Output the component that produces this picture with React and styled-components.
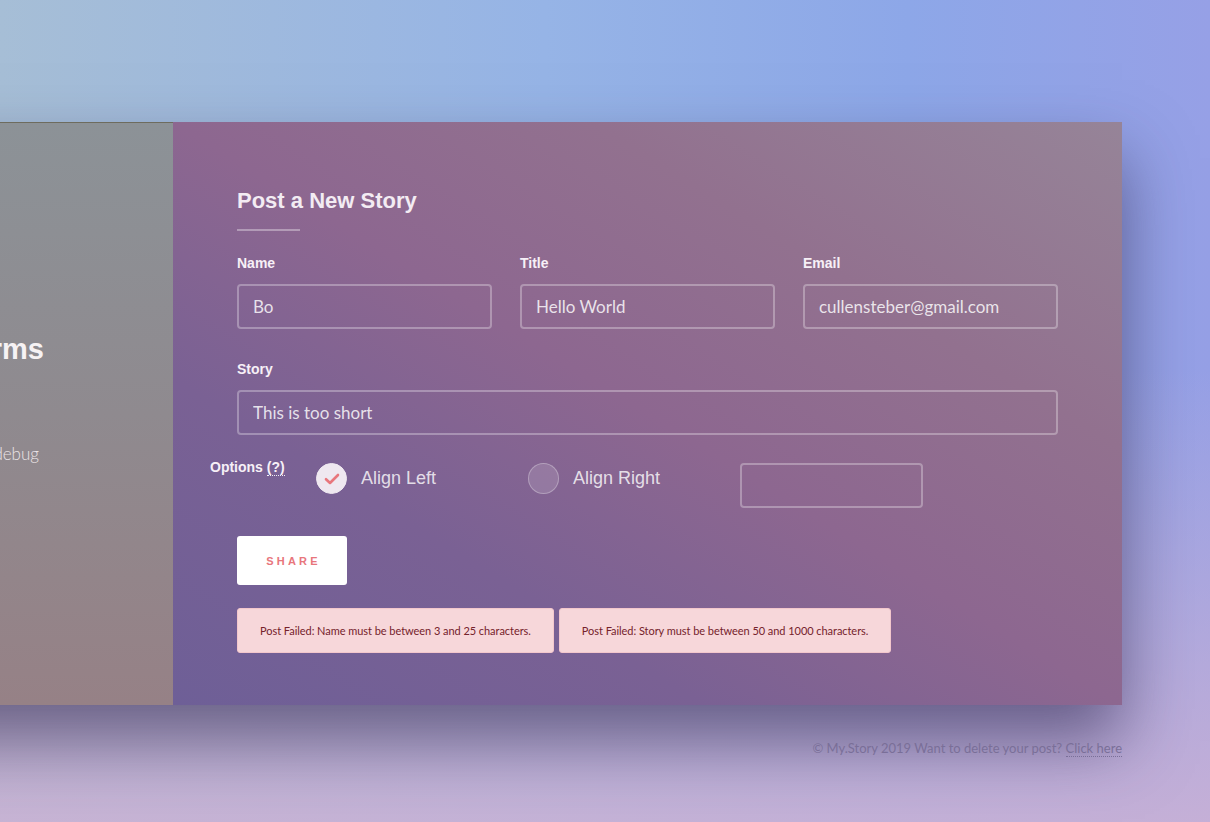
import React from "react";
import styled, { createGlobalStyle } from "styled-components";

const GlobalStyle = createGlobalStyle`
  html, body {
    margin: 0;
    padding: 0;
    height: 100%;
    overflow: hidden;
  }
  * {
    box-sizing: border-box;
  }
`;

const Page = styled.div`
  height: 822px;
  width: 100%;
  overflow: hidden;
  display: flex;
  flex-direction: column;
  align-items: flex-end;
  padding: 122px 88px 0 0;
  font-family: "Liberation Sans", Arial, sans-serif;
  background:
    linear-gradient(180deg, rgba(200, 180, 215, 0) 0%, rgba(200, 180, 215, 0) 45%, rgba(205, 178, 212, 0.85) 100%),
    linear-gradient(90deg, #a6bed6 0%, #96b4e6 45%, #8da7e8 75%, #96a0e6 100%);
`;

const Card = styled.div`
  display: flex;
  height: 583px;
  box-shadow: 0 36px 64px rgba(50, 40, 80, 0.6);
`;

const SidePanel = styled.div`
  width: 400px;
  display: flex;
  flex-direction: column;
  align-items: flex-end;
  padding: 209px 129px 0 0;
  border-top: 1px solid #6e6c5e;
  background: linear-gradient(180deg, #8c9297 0%, #8f8a8f 50%, #968186 100%);
`;

const SideTitle = styled.h2`
  margin: 0;
  font-size: 29px;
  line-height: 34px;
  font-weight: 700;
  color: #f6f2f4;
  white-space: nowrap;
`;

const SideText = styled.p`
  margin: 76px 5px 0 0;
  font-family: Lato, "Open Sans", sans-serif;
  font-size: 17px;
  line-height: 24px;
  font-weight: 300;
  color: #ebe4e6;
  white-space: nowrap;
`;

const FormPanel = styled.div`
  width: 949px;
  padding: 65px 64px 0;
  background: linear-gradient(
    to top right,
    #6e5f97 0%,
    #7a6194 28%,
    #8d6790 50%,
    #92718f 72%,
    #968498 100%
  );
`;

const Heading = styled.h1`
  margin: 0;
  font-size: 22px;
  line-height: 28px;
  font-weight: 700;
  color: #f3ecf3;
`;

const Rule = styled.div`
  width: 63px;
  height: 2px;
  margin-top: 14px;
  background: rgba(255, 255, 255, 0.35);
`;

const FieldGrid = styled.div`
  display: grid;
  grid-template-columns: repeat(${(p) => p.cols}, 1fr);
  column-gap: 28px;
  margin-top: ${(p) => p.top}px;
`;

const Field = styled.label`
  display: flex;
  flex-direction: column;
`;

const Label = styled.span`
  font-size: 14px;
  line-height: 17px;
  font-weight: 700;
  color: #f7f0f7;
  margin-bottom: 12px;
`;

const Input = styled.input`
  width: ${(p) => (p.$w ? `${p.$w}px` : "100%")};
  height: 45px;
  padding: 0 14px;
  border: 2px solid rgba(255, 255, 255, 0.3);
  border-radius: 4px;
  background: transparent;
  font-family: Lato, "Open Sans", sans-serif;
  font-size: 17px;
  color: rgba(255, 255, 255, 0.82);
  outline: none;
`;

const OptionsRow = styled.div`
  display: flex;
  align-items: flex-start;
  margin: 28px 0 0 -27px;
`;

const OptionsLabel = styled.span`
  width: 106px;
  margin-top: -4px;
  font-size: 14px;
  line-height: 17px;
  font-weight: 700;
  color: #f7f0f7;
`;

const Hint = styled.abbr`
  text-decoration: none;
  border-bottom: 1px dotted rgba(255, 255, 255, 0.9);
`;

const Option = styled.div`
  width: 212px;
  height: 31px;
  display: flex;
  align-items: center;
  gap: 14px;
`;

const Circle = styled.span`
  width: 31px;
  height: 31px;
  border-radius: 50%;
  display: flex;
  align-items: center;
  justify-content: center;
  background: ${(p) => (p.$on ? "#efe8f0" : "rgba(255, 255, 255, 0.14)")};
  border: 1px solid ${(p) => (p.$on ? "#efe8f0" : "rgba(255, 255, 255, 0.28)")};
`;

const OptionText = styled.span`
  font-size: 18px;
  color: rgba(255, 255, 255, 0.8);
`;

const ShareButton = styled.button`
  display: block;
  width: 110px;
  height: 49px;
  margin-top: 28px;
  border: none;
  border-radius: 3px;
  background: #ffffff;
  color: #e8767c;
  font-family: "Liberation Sans", Arial, sans-serif;
  font-size: 11px;
  font-weight: 700;
  letter-spacing: 3.2px;
  padding: 0 0 0 3px;
`;

const Alerts = styled.div`
  display: flex;
  gap: 5px;
  margin-top: 23px;
`;

const Alert = styled.div`
  height: 45px;
  display: flex;
  align-items: center;
  padding: 0 22px;
  background: #f7d7da;
  border: 1px solid #f3c7cc;
  border-radius: 3px;
  color: #75222b;
  font-family: Lato, "Open Sans", sans-serif;
  font-size: 11px;
  letter-spacing: -0.05px;
`;

const Footer = styled.p`
  margin: 33px 0 0;
  font-family: Lato, "Open Sans", sans-serif;
  font-size: 13px;
  line-height: 20px;
  color: #7a6f98;
`;

const FooterLink = styled.a`
  color: inherit;
  text-decoration: none;
  border-bottom: 1px dotted #7a6f98;
`;

const Check = () => (
  <svg width="16" height="12" viewBox="0 0 16 12" fill="none">
    <path
      d="M2 6.2 L6 10 L14 2"
      stroke="#e8767c"
      strokeWidth="2.6"
      strokeLinecap="round"
      strokeLinejoin="round"
    />
  </svg>
);

export default function App() {
  return (
    <>
      <GlobalStyle />
      <Page>
        <Card>
          <SidePanel>
            <SideTitle>Story Forms</SideTitle>
            <SideText>Share a story, or help us debug</SideText>
          </SidePanel>
          <FormPanel>
            <Heading>Post a New Story</Heading>
            <Rule />
            <FieldGrid cols={3} top={24}>
              <Field>
                <Label>Name</Label>
                <Input defaultValue="Bo" />
              </Field>
              <Field>
                <Label>Title</Label>
                <Input defaultValue="Hello World" />
              </Field>
              <Field>
                <Label>Email</Label>
                <Input defaultValue="cullensteber@gmail.com" />
              </Field>
            </FieldGrid>
            <FieldGrid cols={1} top={32}>
              <Field>
                <Label>Story</Label>
                <Input defaultValue="This is too short" />
              </Field>
            </FieldGrid>
            <OptionsRow>
              <OptionsLabel>
                Options <Hint title="help">(?)</Hint>
              </OptionsLabel>
              <Option>
                <Circle $on>
                  <Check />
                </Circle>
                <OptionText>Align Left</OptionText>
              </Option>
              <Option>
                <Circle />
                <OptionText>Align Right</OptionText>
              </Option>
              <Input $w={183} />
            </OptionsRow>
            <ShareButton>SHARE</ShareButton>
            <Alerts>
              <Alert>Post Failed: Name must be between 3 and 25 characters.</Alert>
              <Alert>Post Failed: Story must be between 50 and 1000 characters.</Alert>
            </Alerts>
          </FormPanel>
        </Card>
        <Footer>
          © My.Story 2019 Want to delete your post? <FooterLink>Click here</FooterLink>
        </Footer>
      </Page>
    </>
  );
}
